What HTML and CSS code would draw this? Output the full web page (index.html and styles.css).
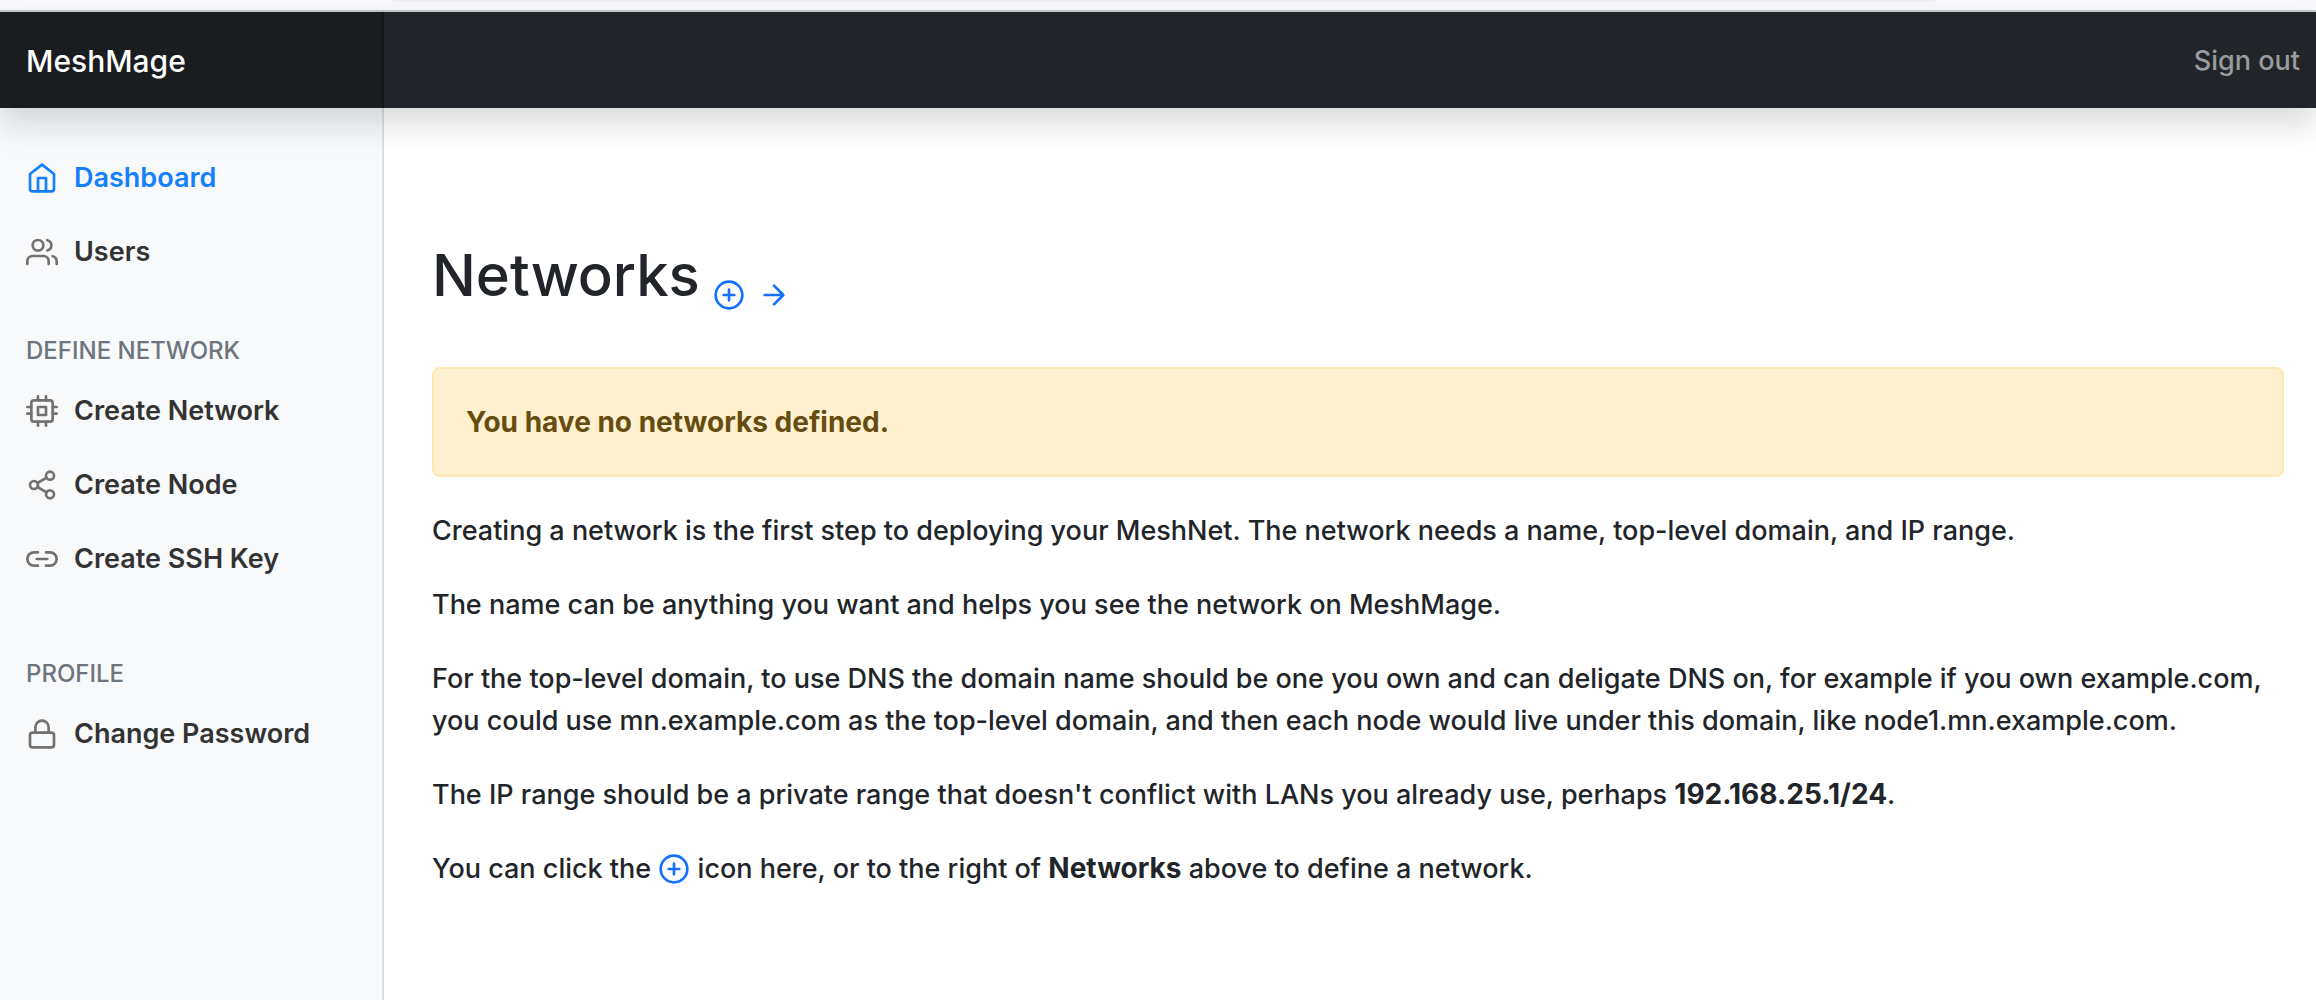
FILE: index.html
```html
<!DOCTYPE html>
<html lang="en">
<head>
<meta charset="utf-8">
<meta name="viewport" content="width=device-width, initial-scale=1">
<title>MeshMage</title>
<link rel="stylesheet" href="styles.css">
</head>
<body>
<svg class="sprite" aria-hidden="true">
  <symbol id="plus-circle" viewBox="0 0 24 24"><circle cx="12" cy="12" r="10"/><path d="M12 8v8M8 12h8"/></symbol>
</svg>
<div class="toolbar"><div class="toolbar-field"></div></div>
<header class="header">
  <a class="brand" href="#">MeshMage</a>
  <a class="sign-out" href="#">Sign out</a>
</header>
<div class="layout">
  <nav class="sidebar" aria-label="Main">
    <ul class="nav">
      <li><a class="nav-link active" href="#"><svg class="icon" viewBox="0 0 24 24"><path d="M3 9l9-7 9 7v11a2 2 0 0 1-2 2H5a2 2 0 0 1-2-2z"/><path d="M9 22V12h6v10"/></svg>Dashboard</a></li>
      <li><a class="nav-link" href="#"><svg class="icon" viewBox="0 0 24 24"><path d="M17 21v-2a4 4 0 0 0-4-4H5a4 4 0 0 0-4 4v2"/><circle cx="9" cy="7" r="4"/><path d="M23 21v-2a4 4 0 0 0-3-3.87M16 3.13a4 4 0 0 1 0 7.75"/></svg>Users</a></li>
    </ul>
    <h2 class="nav-heading">Define network</h2>
    <ul class="nav">
      <li><a class="nav-link" href="#"><svg class="icon" viewBox="0 0 24 24"><rect x="4" y="4" width="16" height="16" rx="2"/><rect x="9" y="9" width="6" height="6"/><path d="M9 1v3M15 1v3M9 20v3M15 20v3M20 9h3M20 14h3M1 9h3M1 14h3"/></svg>Create Network</a></li>
      <li><a class="nav-link" href="#"><svg class="icon" viewBox="0 0 24 24"><circle cx="18" cy="5" r="3"/><circle cx="6" cy="12" r="3"/><circle cx="18" cy="19" r="3"/><path d="M8.59 13.51l6.83 3.98M15.41 6.51l-6.82 3.98"/></svg>Create Node</a></li>
      <li><a class="nav-link" href="#"><svg class="icon" viewBox="0 0 24 24"><path d="M15 7h3a5 5 0 0 1 5 5 5 5 0 0 1-5 5h-3m-6 0H6a5 5 0 0 1-5-5 5 5 0 0 1 5-5h3M8 12h8"/></svg>Create SSH Key</a></li>
    </ul>
    <h2 class="nav-heading nav-heading-profile">Profile</h2>
    <ul class="nav">
      <li><a class="nav-link" href="#"><svg class="icon" viewBox="0 0 24 24"><rect x="3" y="11" width="18" height="11" rx="2"/><path d="M7 11V7a5 5 0 0 1 10 0v4"/></svg>Change Password</a></li>
    </ul>
  </nav>
  <main class="content">
    <div class="title-row">
      <h1 class="title">Networks</h1>
      <a class="action" href="#" aria-label="Create network"><svg class="icon"><use href="#plus-circle"/></svg></a>
      <a class="action" href="#" aria-label="View networks"><svg class="icon" viewBox="0 0 24 24"><path d="M5 12h14M12 5l7 7-7 7"/></svg></a>
    </div>
    <div class="alert" role="alert"><strong>You have no networks defined.</strong></div>
    <p>Creating a network is the first step to deploying your MeshNet. The network needs a name, top-level domain, and IP range.</p>
    <p>The name can be anything you want and helps you see the network on MeshMage.</p>
    <p>For the top-level domain, to use DNS the domain name should be one you own and can deligate DNS on, for example if you own example.com, you could use mn.example.com as the top-level domain, and then each node would live under this domain, like node1.mn.example.com.</p>
    <p>The IP range should be a private range that doesn't conflict with LANs you already use, perhaps <strong>192.168.25.1/24</strong>.</p>
    <p>You can click the <a class="inline-action" href="#" aria-label="Create network"><svg class="icon"><use href="#plus-circle"/></svg></a> icon here, or to the right of <strong>Networks</strong> above to define a network.</p>
  </main>
</div>
</body>
</html>
```
FILE: styles.css
```css
* { box-sizing: border-box; }

body {
  margin: 0;
  min-height: 100vh;
  display: flex;
  flex-direction: column;
  background: #fff;
  color: #212529;
  font: 500 27px/42px Inter, "Liberation Sans", sans-serif;
}

a { color: #1470ff; text-decoration: none; }
strong { font-size: 28px; font-weight: 700; line-height: 1; }
.sprite { display: none; }

.icon {
  width: 32px;
  height: 32px;
  flex: none;
  fill: none;
  stroke: currentColor;
  stroke-width: 2;
  stroke-linecap: round;
  stroke-linejoin: round;
}

.toolbar {
  height: 12px;
  padding: 0 380px 0 392px;
  background: #f9f9fb;
  border-bottom: 2px solid #c5c7ca;
}

.toolbar-field {
  height: 2px;
  background: #f0f0f2;
  border-radius: 0 0 4px 4px;
}

.header {
  display: flex;
  align-items: stretch;
  justify-content: space-between;
  height: 96px;
  background: #212529;
  box-shadow: 0 16px 32px rgba(0, 0, 0, .15);
  z-index: 1;
}

.brand {
  width: 384px;
  padding: 2px 26px 0;
  background: #1a1d1f;
  box-shadow: inset -2px 0 0 #141718;
  color: #fff;
  font-size: 30px;
  line-height: 94px;
}

.sign-out {
  padding: 2px 16px 0;
  color: #999b9d;
  line-height: 94px;
}

.layout { display: flex; flex: 1; }

.sidebar {
  flex: 0 0 384px;
  padding-top: 33px;
  background: #f8f9fb;
  border-right: 2px solid #dcdee0;
}

.nav { margin: 0; padding: 0; list-style: none; }

.nav-link {
  display: flex;
  align-items: center;
  gap: 16px;
  padding: 16px 26px;
  color: #333;
  font-weight: 600;
}

.nav-link .icon { color: #727272; }
.nav-link.active,
.nav-link.active .icon { color: #147fff; }

.nav-heading {
  margin: 44px 26px 5px;
  color: #6c757d;
  font-size: 24px;
  font-weight: 500;
  line-height: 36px;
  text-transform: uppercase;
}

.nav-heading-profile { margin-top: 60px; }

.content { flex: 1; min-width: 0; padding: 132px 32px 32px 48px; }

.title-row {
  display: flex;
  align-items: flex-end;
  gap: 13px;
  margin-bottom: 56px;
}

.title { margin: 0; font-size: 58px; font-weight: 500; line-height: 71px; }
.action { display: flex; }

.alert {
  margin-bottom: 33px;
  padding: 33px 32px 31px;
  background: #fff1d0;
  border: 2px solid #fee7b3;
  border-radius: 8px;
  color: #664d0f;
}

p { margin: 0 0 32px; }
.inline-action .icon { vertical-align: text-bottom; }
```
